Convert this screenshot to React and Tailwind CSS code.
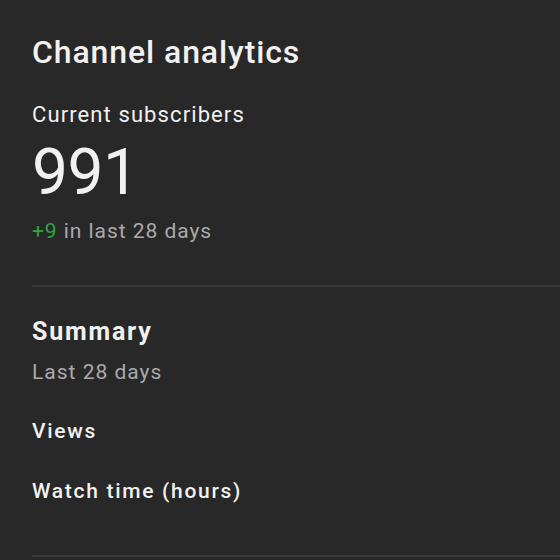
export default function App() {
  return (
    <div
      className="w-[560px] h-[560px] overflow-hidden bg-[#282828] text-[#f1f1f1]"
      style={{ fontFamily: "Roboto, 'Liberation Sans', sans-serif" }}
    >
      <div className="pl-8 pt-[32px]">
        {/* Subscribers */}
        <h1 className="text-[32px] leading-[40px] font-medium tracking-[0.9px]">Channel analytics</h1>
        <div className="mt-[29px] text-[22px] leading-[28px] tracking-[1.1px]">Current subscribers</div>
        <div className="mt-[12px] text-[64px] leading-[64px] tracking-[-0.5px]">991</div>
        <div className="mt-[12px] text-[21px] leading-[28px] tracking-[0.95px] text-[#aaaaaa]">
          <span className="text-[#2ba640]">+9</span> in last 28 days
        </div>

        <div className="mt-[40px] h-[2px] bg-[#3a3a3a]" />

        {/* Summary */}
        <div className="mt-[30px] text-[25px] leading-[30px] font-bold tracking-[1.8px]">Summary</div>
        <div className="mt-[11px] text-[21px] leading-[28px] tracking-[1px] text-[#aaaaaa]">Last 28 days</div>
        <div className="mt-[31px] text-[21px] leading-[28px] font-medium tracking-[1.7px]">Views</div>
        <div className="mt-[32px] text-[21px] leading-[28px] font-medium tracking-[1.7px]">Watch time (hours)</div>

        <div className="mt-[50px] h-[2px] bg-[#3a3a3a]" />
      </div>
    </div>
  );
}
